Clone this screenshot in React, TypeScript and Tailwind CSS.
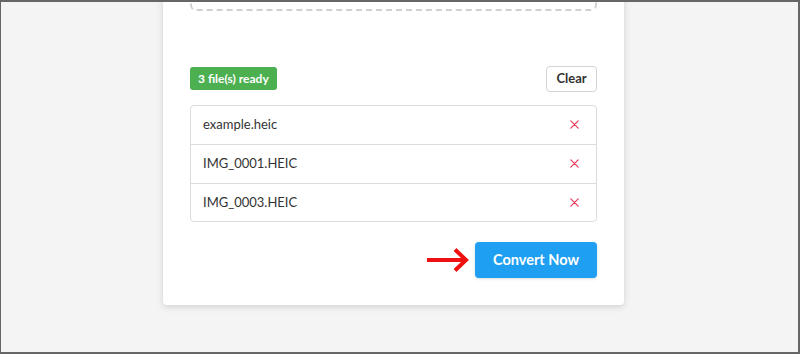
import React from 'react';

const files = ['example.heic', 'IMG_0001.HEIC', 'IMG_0003.HEIC'];

const RemoveIcon = () => (
  <svg width="9" height="9" viewBox="0 0 9 9" className="text-[#e8385a]">
    <path d="M0.8 0.8 L8.2 8.2 M8.2 0.8 L0.8 8.2" stroke="currentColor" strokeWidth="1.2" strokeLinecap="round" />
  </svg>
);

const Arrow = () => (
  <svg width="43" height="26" viewBox="0 0 43 26">
    <path d="M0 13 H38" stroke="#ee1111" strokeWidth="4" />
    <path d="M28 2.5 L39 13 L28 23.5" stroke="#ee1111" strokeWidth="4" fill="none" strokeLinejoin="miter" />
  </svg>
);

const App: React.FC = () => {
  return (
    <div className="h-[354px] w-[800px] overflow-hidden bg-[#f4f4f4] border-t-2 border-l border-r-2 border-b-2 border-[#666] flex flex-col justify-end pb-[47px] font-['Lato',sans-serif]">
      <div className="ml-[162px] w-[461px] shrink-0 bg-white rounded-[4px] shadow-[0_2px_7px_rgba(0,0,0,0.14)] px-[27px] pb-[27px]">
        <div className="h-[150px] border-2 border-dashed border-[#d0d0d0] rounded-[6px]" />

        <div className="mt-[55px] flex items-center justify-between h-[26px]">
          <span className="bg-[#4caf50] text-white text-[12px] font-bold rounded-[3px] h-[23px] px-[8px] flex items-center leading-none">
            3 file(s) ready
          </span>
          <button className="h-[26px] w-[51px] border border-[#d4d4d4] rounded-[4px] bg-white text-[#333] text-[13px] font-bold leading-none">
            Clear
          </button>
        </div>

        <ul className="mt-[13px] border border-[#dcdcdc] rounded-[4px]">
          {files.map((f, i) => (
            <li
              key={f}
              className={`h-[38.5px] flex items-center justify-between pl-[12px] pr-[17px] text-[13px] text-[#333] ${i > 0 ? 'border-t border-[#dcdcdc]' : ''}`}
            >
              <span>{f}</span>
              <RemoveIcon />
            </li>
          ))}
        </ul>

        <div className="mt-[20px] flex items-center justify-end gap-[5px]">
          <Arrow />
          <button className="h-[36px] w-[122px] bg-[#1e9ff2] text-white text-[14.5px] font-bold rounded-[4px] shadow-[0_1px_3px_rgba(0,0,0,0.15)]">
            Convert Now
          </button>
        </div>
      </div>
    </div>
  );
};

export default App;
